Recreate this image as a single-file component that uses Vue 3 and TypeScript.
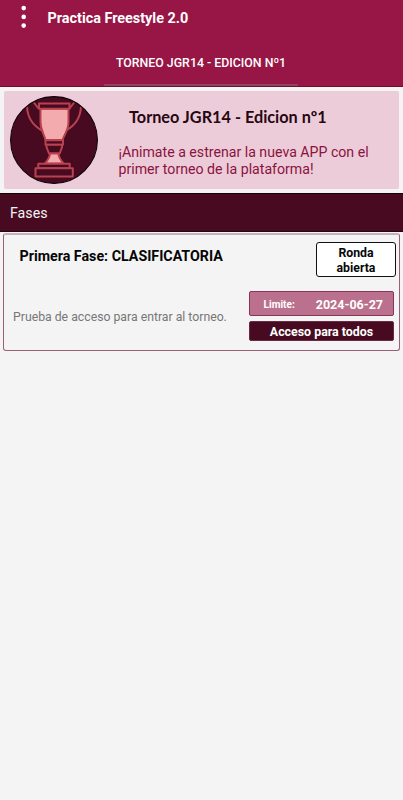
<script setup lang="ts">
interface Phase {
  title: string
  description: string
  status: string
  limit: string
  access: string
}

const appName = 'Practica Freestyle 2.0'
const tab = 'TORNEO JGR14 - EDICION Nº1'
const phases: Phase[] = [
  {
    title: 'Primera Fase: CLASIFICATORIA',
    description: 'Prueba de acceso para entrar al torneo.',
    status: 'Ronda abierta',
    limit: '2024-06-27',
    access: 'Acceso para todos',
  },
]
</script>

<template>
  <div class="screen">
    <header class="header">
      <div class="bar">
        <svg class="dots" width="6" height="24" viewBox="0 0 6 24">
          <circle cx="2.7" cy="3.1" r="2.3" />
          <circle cx="2.7" cy="11.9" r="2.3" />
          <circle cx="2.7" cy="20.6" r="2.3" />
        </svg>
        <h1 class="app-name">{{ appName }}</h1>
      </div>
      <nav class="tabs">
        <div class="tab"><span>{{ tab }}</span></div>
      </nav>
    </header>

    <section class="banner">
      <svg class="trophy" width="88" height="88" viewBox="0 0 88 88">
        <defs>
          <clipPath id="disc"><circle cx="44" cy="44" r="43.4" /></clipPath>
        </defs>
        <circle cx="44" cy="44" r="43.4" fill="#470a21" />
        <g clip-path="url(#disc)" fill="none" stroke="#b8424f" stroke-width="2" stroke-linejoin="round">
          <path d="M28.500 12.500L23 5.500M17 10.500C17.500 22 22 29 32 34.500M59.500 12.500L65 5.500M71 10.500C70.500 22 66 29 56 34.500" />
          <path d="M30.500 12.500h28V26C58.500 34 54.500 38 52.500 44H35.500C34 38 30.500 34 30.500 26z" fill="#f4abae" />
          <path d="M29 7.500h30.500v5.300H29z" fill="#470a21" />
          <path d="M35.500 44.300h17.500v4.400H35.500z" fill="#470a21" />
          <path d="M36.500 48.700h15.500v2.500l-2.300 6.300H39l-2.500-6.300z" fill="#470a21" />
          <path d="M40 57.500h8.500C48.500 61.500 51 64.500 53.500 67.500h-18.500C37.500 64.500 40 61.500 40 57.500z" fill="#f4abae" />
          <path d="M28.300 67.700h31.400v4.600H28.300z" fill="#470a21" />
          <path d="M25.500 72.300h37.300v8.200H25.500z" fill="#470a21" />
        </g>
        <circle cx="44" cy="44" r="43.4" fill="none" stroke="#100207" stroke-width="1.1" />
      </svg>
      <div class="banner-text">
        <h2><span>Torneo JGR14 - Edicion nº1</span></h2>
        <p><span>¡Animate a estrenar la nueva APP con el</span><br /><span>primer torneo de la plataforma!</span></p>
      </div>
    </section>

    <div class="section-title"><span>Fases</span></div>

    <article v-for="phase in phases" :key="phase.title" class="card">
      <div class="card-head">
        <h3><span>{{ phase.title }}</span></h3>
        <div class="status"><span>{{ phase.status }}</span></div>
      </div>
      <div class="card-body">
        <p class="description"><span>{{ phase.description }}</span></p>
        <div class="info">
          <div class="limit"><span class="limit-label">Limite:</span><span class="date">{{ phase.limit }}</span></div>
          <div class="access"><span>{{ phase.access }}</span></div>
        </div>
      </div>
    </article>
  </div>
</template>

<style>
body {
  margin: 0;
  background: #f4f4f4;
}
</style>

<style scoped>
.screen {
  width: 403px;
  height: 800px;
  overflow: hidden;
  background: #f4f4f4;
  font-family: Roboto, sans-serif;
}
* {
  box-sizing: border-box;
}
h1, h2, h3, p {
  margin: 0;
}
span {
  white-space: nowrap;
}
.header {
  height: 87px;
  background: #981645;
  border-bottom: 1px solid #730d2c;
}
.bar {
  height: 40px;
  display: flex;
  align-items: flex-start;
  padding: 5px 0 0 21px;
}
.dots {
  fill: #fff;
}
.app-name {
  margin: 5px 0 0 20.5px;
  font-size: 14.4px;
  line-height: 18px;
  font-weight: 700;
  color: #fff;
}
.tabs {
  display: flex;
  justify-content: center;
  height: 46px;
}
.tab {
  width: 194px;
  margin-right: 1px;
  padding-top: 15px;
  text-align: center;
  color: #fff;
  font-size: 12.35px;
  line-height: 17px;
  font-weight: 500;
  border-bottom: 2px solid #8f4267;
}
.banner {
  display: flex;
  width: 395px;
  height: 98px;
  margin: 4px 0 0 4px;
  padding: 5px 0 0 6px;
  background: #ebccd8;
  border-radius: 2px;
}
.trophy {
  flex: none;
}
.banner-text {
  padding-left: 20.5px;
}
.banner h2 {
  padding: 11px 0 0 10.5px;
  font: 700 16.25px/20px Lato, sans-serif;
  color: #260712;
}
.banner p {
  margin-top: 16.5px;
  font-size: 14.15px;
  line-height: 17px;
  color: #8b1241;
}
.section-title {
  height: 39px;
  margin-top: 4px;
  padding-left: 10px;
  background: #470a21;
  border-top: 1px solid #16030a;
  border-bottom: 1px solid #260511;
  color: #f4f4f4;
  font-size: 14.2px;
  line-height: 39px;
}
.card {
  width: 397px;
  height: 118px;
  margin: 1px 0 0 3px;
  border: 1px solid #986078;
  border-top: 2px solid #c9aebb;
  border-radius: 3px;
}
.card-head {
  display: flex;
  justify-content: space-between;
  height: 56px;
  padding: 7px 3px 0 15.5px;
}
.card h3 {
  padding-top: 5px;
  font-size: 14.25px;
  line-height: 18px;
  color: #050505;
}
.status {
  width: 80px;
  height: 35px;
  padding: 3px 14px 0;
  text-align: center;
  background: #fff;
  border: 1px solid #111;
  border-radius: 3px;
  font-size: 12.3px;
  line-height: 14.5px;
  font-weight: 700;
  color: #080808;
}
.status span {
  white-space: normal;
}
.card-body {
  display: flex;
  justify-content: space-between;
  padding: 0 5px 0 9px;
}
.description {
  padding-top: 18px;
  font-size: 12.25px;
  line-height: 16px;
  color: #777;
}
.info {
  width: 145px;
  color: #fff;
  font-weight: 700;
}
.limit {
  display: flex;
  align-items: center;
  justify-content: space-between;
  height: 25px;
  padding: 1px 10px 0 13.5px;
  background: #bb718d;
  border: 1px solid #8a3459;
  border-radius: 2px;
}
.limit-label {
  font-size: 10.1px;
}
.date {
  font-size: 12.5px;
}
.access {
  height: 20px;
  margin-top: 4.5px;
  text-align: center;
  background: #470a21;
  border: 1px solid #6b2944;
  border-radius: 2px;
  font-size: 12.4px;
  line-height: 20px;
}
</style>
